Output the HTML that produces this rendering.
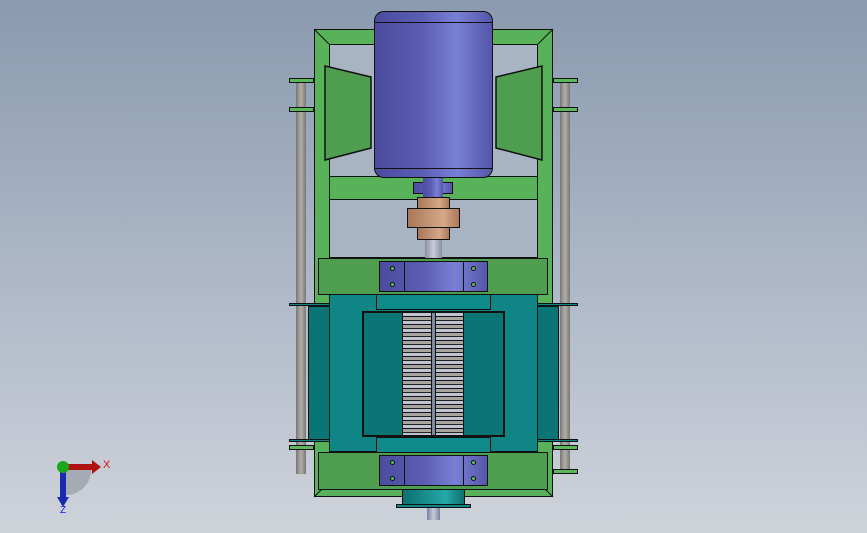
<!DOCTYPE html><html><head><style>
body{margin:0;width:867px;height:533px;overflow:hidden;background:linear-gradient(#8a9aaf,#b3bccb 60%,#cfd3da);position:relative;font-family:"Liberation Sans",sans-serif}
div{position:absolute;box-sizing:border-box}
.g{background:#58b25a;border:1.5px solid #111}
.dg{background:#4f9d4f;border:1.5px solid #111}
.t{background:#0f8585;border:1.5px solid #111}
.td{background:#0b7474;border:1.5px solid #111}
.p{background:linear-gradient(90deg,#4b4c9e,#5b5db3 40%,#7880d6 70%,#5456a8);border:1px solid #111}
.rod{background:linear-gradient(90deg,#777,#b5aea6 50%,#777)}
.br{background:#5cb85c;border:1px solid #111}
.h{width:5px;height:5px;border-radius:50%;background:#5cc05c;border:1px solid #111}
.vl{width:1px;background:#111}
</style></head><body>
<div class="rod" style="left:296px;top:80px;width:10px;height:394px"></div>
<div class="rod" style="left:560px;top:80px;width:10px;height:394px"></div>
<div class="br" style="left:289px;top:78px;width:25px;height:5px"></div>
<div class="br" style="left:289px;top:107px;width:25px;height:5px"></div>
<div class="br" style="left:553px;top:78px;width:25px;height:5px"></div>
<div class="br" style="left:553px;top:107px;width:25px;height:5px"></div>
<div class="br" style="left:289px;top:445px;width:25px;height:5px"></div>
<div class="br" style="left:553px;top:445px;width:25px;height:5px"></div>
<div class="br" style="left:553px;top:469px;width:25px;height:5px"></div>
<div class="g" style="left:314px;top:29px;width:239px;height:468px"></div>
<div style="left:329px;top:44px;width:209px;height:214px;background:#a8b3c3;border:1.5px solid #111"></div>
<div class="g" style="left:329px;top:176px;width:209px;height:24px"></div>
<svg style="position:absolute;left:0;top:0" width="867" height="533">
<polygon points="325,66 371,77 371,148 325,160" fill="#4f9d4f" stroke="#111" stroke-width="1.5"/>
<polygon points="542,66 496,77 496,148 542,160" fill="#4f9d4f" stroke="#111" stroke-width="1.5"/>
<line x1="314" y1="29" x2="329" y2="44" stroke="#111"/><line x1="553" y1="29" x2="538" y2="44" stroke="#111"/>
<line x1="314" y1="497" x2="329" y2="482" stroke="#111"/><line x1="553" y1="497" x2="538" y2="482" stroke="#111"/>
</svg>
<div class="p" style="left:374px;top:11px;width:119px;height:167px;border-radius:10px"></div>
<div style="left:374px;top:22px;width:119px;height:1px;background:#111"></div>
<div style="left:374px;top:168px;width:119px;height:1px;background:#111"></div>
<div class="p" style="left:413px;top:182px;width:40px;height:12px"></div>
<div class="p" style="left:423px;top:178px;width:20px;height:20px;border:none"></div>
<div style="left:417px;top:197px;width:33px;height:43px;background:linear-gradient(90deg,#a87858,#d7a888 70%,#a87858);border:1px solid #111"></div>
<div style="left:407px;top:208px;width:53px;height:20px;background:linear-gradient(90deg,#a87858,#d7a888 70%,#a87858);border:1px solid #111"></div>
<div style="left:425px;top:240px;width:17px;height:20px;background:linear-gradient(90deg,#8890a8,#c8ccd8,#8890a8)"></div>
<div class="dg" style="left:318px;top:258px;width:230px;height:37px"></div>
<div class="dg" style="left:318px;top:452px;width:230px;height:38px"></div>
<div class="p" style="left:379px;top:261px;width:109px;height:31px"></div>
<div class="p" style="left:379px;top:455px;width:109px;height:31px"></div>
<div class="vl" style="left:404px;top:261px;height:31px"></div><div class="vl" style="left:463px;top:261px;height:31px"></div>
<div class="vl" style="left:404px;top:455px;height:31px"></div><div class="vl" style="left:463px;top:455px;height:31px"></div>
<div class="h" style="left:390px;top:266px"></div><div class="h" style="left:390px;top:282px"></div>
<div class="h" style="left:471px;top:266px"></div><div class="h" style="left:471px;top:282px"></div>
<div class="h" style="left:390px;top:460px"></div><div class="h" style="left:390px;top:476px"></div>
<div class="h" style="left:471px;top:460px"></div><div class="h" style="left:471px;top:476px"></div>
<div class="td" style="left:308px;top:306px;width:251px;height:135px"></div>
<div style="left:289px;top:303px;width:289px;height:3px;background:#0f8585;border:1px solid #111"></div>
<div style="left:289px;top:439px;width:289px;height:3px;background:#0f8585;border:1px solid #111"></div>
<div class="t" style="left:329px;top:294px;width:209px;height:158px"></div>
<div class="t" style="left:376px;top:294px;width:115px;height:16px;background:#0e8a8a"></div>
<div class="t" style="left:376px;top:437px;width:115px;height:16px;background:#0e8a8a"></div>
<div style="left:362px;top:311px;width:143px;height:126px;background:#0b7474;border:2px solid #111"></div>
<div style="left:402px;top:312px;width:62px;height:124px;background:repeating-linear-gradient(#c0c4d0 0 3px,#111 3px 4px,#a8a49e 4px 7px,#222 7px 8px);border:1px solid #111"></div>
<div style="left:431px;top:312px;width:5px;height:124px;background:#8088a0;border:1px solid #111"></div>
<div style="left:402px;top:489px;width:63px;height:16px;background:linear-gradient(90deg,#0c7070,#25a8a8 70%,#0c7070);border:1px solid #111"></div>
<div style="left:396px;top:504px;width:75px;height:4px;background:#0f8585;border:1px solid #111"></div>
<div style="left:427px;top:508px;width:13px;height:12px;background:linear-gradient(90deg,#7880a0,#c8ccd8,#7880a0)"></div>
<svg style="position:absolute;left:40px;top:440px" width="90" height="90">
<path d="M26,30 L51,30 A25,25 0 0 1 26,55 Z" fill="#8e949c" opacity=".6"/>
<rect x="24" y="24" width="30" height="6" fill="#b01010"/><polygon points="52,20 61,27 52,34" fill="#b01010"/>
<rect x="20" y="27" width="6" height="32" fill="#1a2ab0"/><polygon points="17,57 29,57 23,67" fill="#1a2ab0"/>
<circle cx="23" cy="27" r="6" fill="#1aa81a"/>
<text x="63" y="28" font-size="11" fill="#e01010">X</text>
<text x="20" y="73" font-size="10" fill="#1020e0">Z</text>
</svg>
</body></html>
